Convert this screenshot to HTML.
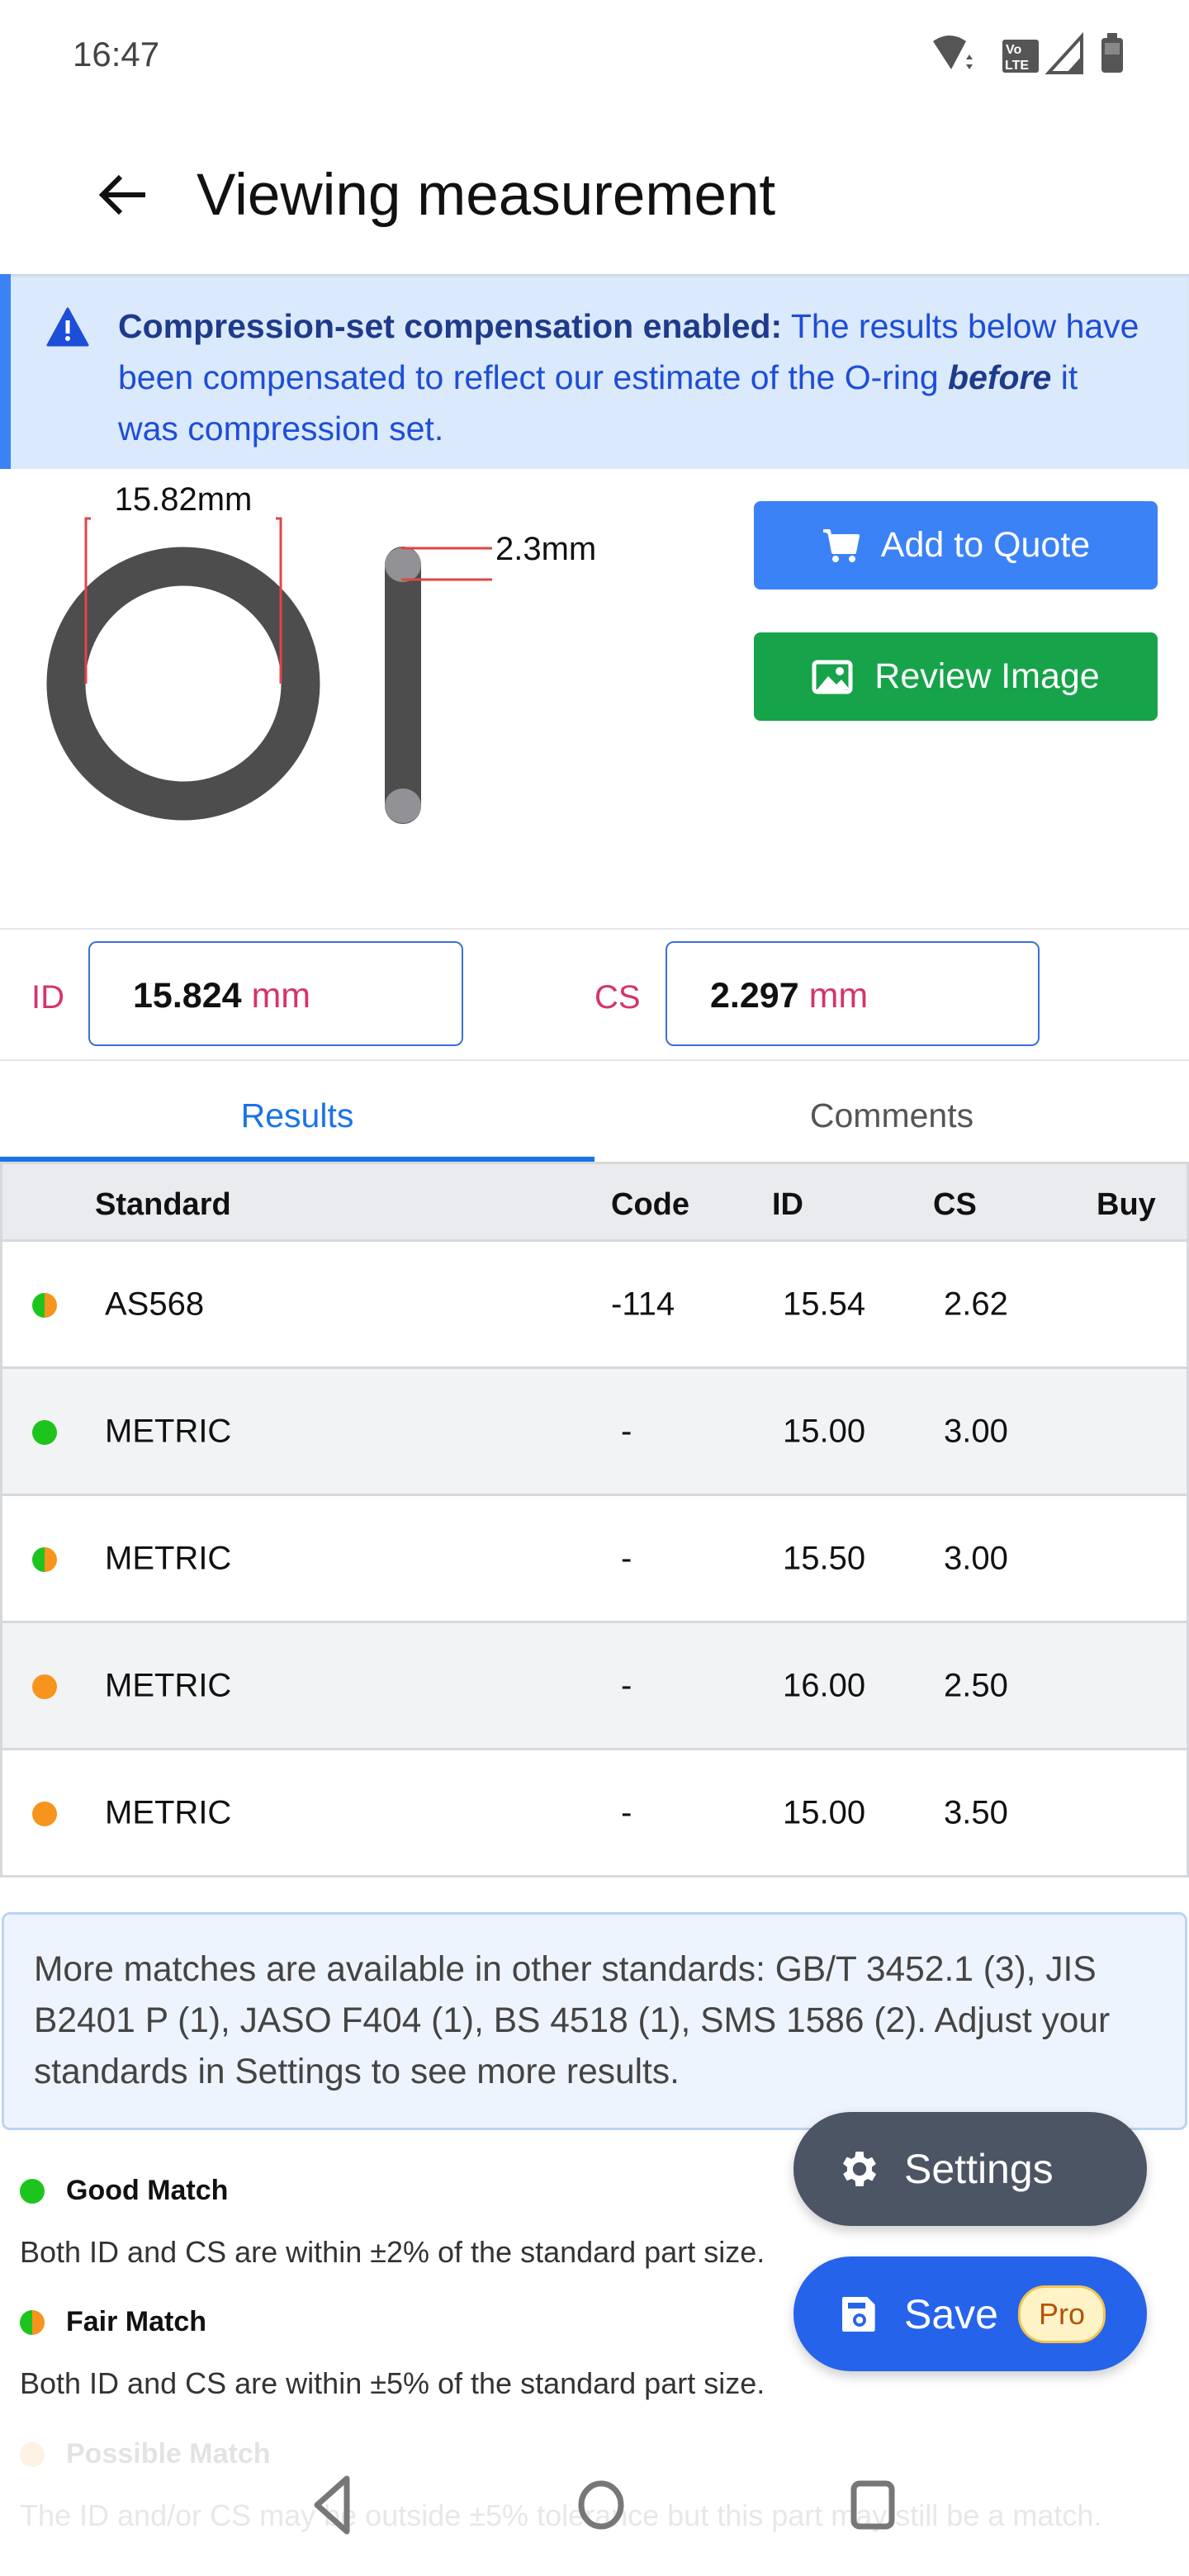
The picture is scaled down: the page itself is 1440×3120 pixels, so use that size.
<!DOCTYPE html>
<html><head><meta charset="utf-8"><style>
*{margin:0;padding:0;box-sizing:border-box}
body{width:1440px;height:3120px;position:relative;background:#fff;font-family:"Liberation Sans",Arial,sans-serif;overflow:hidden;color:#111}
.a{position:absolute;white-space:nowrap}
.row{position:absolute;left:0;width:1440px;height:154px;border-bottom:3px solid #d5d8dc;font-size:40px;color:#111}
.row span{position:absolute;top:50%;transform:translateY(-50%)}
.dot{position:absolute;left:39px;top:62px;width:30px;height:30px;border-radius:50%}
.g{background:#1ec41e}.o{background:#f7941d}.h{background:linear-gradient(90deg,#1ec41e 50%,#f7941d 50%)}
</style></head><body>
<!-- status bar -->
<div class="a" style="left:88px;top:42px;font-size:42px;color:#444">16:47</div>
<svg class="a" style="left:1120px;top:36px" width="250" height="56" viewBox="0 0 250 56">
<path d="M10 14 Q30 0 50 14 L32 48 Z" fill="#555"/>
<path d="M50 36 l4 -6 4 6z M50 42 l4 6 4 -6z" fill="#555"/>
<rect x="94" y="12" width="44" height="40" rx="3" fill="#555"/>
<text x="98" y="29" font-size="16" font-weight="bold" fill="#fff" font-family="Liberation Sans">Vo</text>
<text x="97" y="48" font-size="16" font-weight="bold" fill="#fff" font-family="Liberation Sans">LTE</text>
<path d="M150 52 L190 8 L190 52 Z" fill="none" stroke="#555" stroke-width="4"/>
<path d="M172 52 L190 32 L190 52Z" fill="#555"/>
<rect x="214" y="10" width="26" height="42" rx="4" fill="#555"/><rect x="221" y="4" width="12" height="8" fill="#555"/>
<rect x="218" y="16" width="18" height="14" fill="#888"/>
</svg>
<!-- app bar -->
<svg class="a" style="left:116px;top:208px" width="64" height="56" viewBox="0 0 64 56"><path d="M60 28 H8 M30 6 L8 28 L30 50" fill="none" stroke="#111" stroke-width="6"/></svg>
<div class="a" style="left:238px;top:196px;font-size:71px;color:#111">Viewing measurement</div>
<div class="a" style="left:0;top:332px;width:1440px;height:236px;background:#dbe9fc;box-shadow:inset 0 4px 4px -2px rgba(0,0,0,.12)"></div>
<div class="a" style="left:0;top:332px;width:13px;height:236px;background:#3b82f6"></div>
<svg class="a" style="left:56px;top:372px" width="52" height="48" viewBox="0 0 52 48"><path d="M26 2 L50 46 H2 Z" fill="#1d4ed8" stroke="#1d4ed8" stroke-width="3" stroke-linejoin="round"/><rect x="23.5" y="16" width="5" height="16" fill="#fff"/><circle cx="26" cy="38" r="3" fill="#fff"/></svg>
<div class="a" style="left:143px;top:364px;font-size:41px;line-height:62px;color:#1d4ed8">
<b style="color:#1e3a8a">Compression-set compensation enabled:</b> The results below have<br>been compensated to reflect our estimate of the O-ring <b><i style="color:#1e3a8a">before</i></b> it<br>was compression set.</div>
<!-- diagram -->
<svg class="a" style="left:0;top:568px" width="900" height="556" viewBox="0 0 900 556">
<circle cx="222" cy="260" r="142" fill="none" stroke="#4d4d4d" stroke-width="47"/>
<path d="M104 260 V60 H110 M340 260 V60 H334" fill="none" stroke="#e04545" stroke-width="3"/>
<text x="222" y="50" text-anchor="middle" font-size="40" font-family="Liberation Sans" fill="#111">15.82mm</text>
<rect x="466" y="94" width="44" height="336" rx="22" fill="#4d4d4d"/>
<ellipse cx="488" cy="116" rx="22" ry="21" fill="#929296"/>
<ellipse cx="488" cy="408" rx="22" ry="21" fill="#929296"/>
<path d="M486 96 H596 M486 134 H596" stroke="#e04545" stroke-width="3"/>
<text x="600" y="110" font-size="40" font-family="Liberation Sans" fill="#111">2.3mm</text>
</svg>
<div class="a" style="left:913px;top:607px;width:489px;height:107px;background:#3b82f6;border-radius:8px;color:#fff;font-size:43px;display:flex;align-items:center;justify-content:center;gap:26px">
<svg width="46" height="44" viewBox="0 0 46 44"><path d="M2 4 H9 L14 30 H40 L44 10 H11" fill="#fff" stroke="#fff" stroke-width="4" stroke-linejoin="round"/><circle cx="17" cy="38" r="4" fill="#fff"/><circle cx="37" cy="38" r="4" fill="#fff"/></svg>Add to Quote</div>
<div class="a" style="left:913px;top:766px;width:489px;height:107px;background:#16a34a;border-radius:8px;color:#fff;font-size:43px;display:flex;align-items:center;justify-content:center;gap:26px">
<svg width="50" height="42" viewBox="0 0 50 42"><rect x="3" y="3" width="44" height="36" rx="4" fill="none" stroke="#fff" stroke-width="5"/><path d="M5 38 L20 20 L30 30 L36 24 L46 36Z" fill="#fff"/><circle cx="34" cy="14" r="5" fill="#fff"/></svg>Review Image</div>
<!-- inputs -->
<div class="a" style="left:0;top:1124px;width:1440px;height:2px;background:#e5e7eb"></div>
<div class="a" style="left:38px;top:1186px;font-size:40px;color:#d6336c">ID</div>
<div class="a" style="left:107px;top:1140px;width:454px;height:127px;border:2.5px solid #3b6fd8;border-radius:10px;font-size:43px;padding:40px 0 0 52px"><b>15.824</b> <span style="color:#d6336c">mm</span></div>
<div class="a" style="left:720px;top:1186px;font-size:40px;color:#d6336c">CS</div>
<div class="a" style="left:806px;top:1140px;width:453px;height:127px;border:2.5px solid #3b6fd8;border-radius:10px;font-size:43px;padding:40px 0 0 52px"><b>2.297</b> <span style="color:#d6336c">mm</span></div>
<div class="a" style="left:0;top:1283px;width:1440px;height:2px;background:#e5e7eb"></div>
<!-- tabs -->
<div class="a" style="left:0;top:1328px;width:720px;text-align:center;font-size:41px;color:#1a73e8">Results</div>
<div class="a" style="left:720px;top:1328px;width:720px;text-align:center;font-size:41px;color:#555">Comments</div>
<div class="a" style="left:0;top:1401px;width:720px;height:6px;background:#1a73e8"></div>
<div class="a" style="left:0;top:1407px;width:1440px;height:3px;background:#d8d8d8"></div>
<!-- table -->
<div class="a" style="left:0;top:1410px;width:1440px;height:94px;background:#e9ebee;border-bottom:3px solid #d5d8dc;font-size:38px;font-weight:bold">
<span class="a" style="left:115px;top:28px">Standard</span><span class="a" style="left:740px;top:28px">Code</span><span class="a" style="left:935px;top:28px">ID</span><span class="a" style="left:1130px;top:28px">CS</span><span class="a" style="left:1328px;top:28px">Buy</span></div>
<div class="row" style="top:1504px;background:#fff"><i class="dot h"></i><span style="left:127px">AS568</span><span style="left:740px">-114</span><span style="left:948px">15.54</span><span style="left:1143px">2.62</span></div>
<div class="row" style="top:1658px;background:#f2f3f5"><i class="dot g"></i><span style="left:127px">METRIC</span><span style="left:752px">-</span><span style="left:948px">15.00</span><span style="left:1143px">3.00</span></div>
<div class="row" style="top:1812px;background:#fff"><i class="dot h"></i><span style="left:127px">METRIC</span><span style="left:752px">-</span><span style="left:948px">15.50</span><span style="left:1143px">3.00</span></div>
<div class="row" style="top:1966px;background:#f2f3f5"><i class="dot o"></i><span style="left:127px">METRIC</span><span style="left:752px">-</span><span style="left:948px">16.00</span><span style="left:1143px">2.50</span></div>
<div class="row" style="top:2120px;background:#fff;height:154px"><i class="dot o"></i><span style="left:127px">METRIC</span><span style="left:752px">-</span><span style="left:948px">15.00</span><span style="left:1143px">3.50</span></div>
<div class="a" style="left:0;top:1410px;width:3px;height:864px;background:#d5d8dc"></div>
<div class="a" style="left:1437px;top:1410px;width:3px;height:864px;background:#d5d8dc"></div>
<!-- info -->
<div class="a" style="left:2px;top:2316px;width:1436px;height:264px;background:#eef4fd;border:3px solid #bcd3f3;border-radius:10px;font-size:42.5px;line-height:62px;color:#444;padding:36px 0 0 36px;white-space:nowrap">More matches are available in other standards: GB/T 3452.1 (3), JIS<br>B2401 P (1), JASO F404 (1), BS 4518 (1), SMS 1586 (2). Adjust your<br>standards in Settings to see more results.</div>
<!-- legend -->
<i class="a dot g" style="left:24px;top:2639px"></i>
<div class="a" style="left:80px;top:2634px;font-size:34px;font-weight:bold">Good Match</div>
<div class="a" style="left:24px;top:2707px;font-size:36px;color:#333">Both ID and CS are within ±2% of the standard part size.</div>
<i class="a dot h" style="left:24px;top:2798px"></i>
<div class="a" style="left:80px;top:2793px;font-size:34px;font-weight:bold">Fair Match</div>
<div class="a" style="left:24px;top:2866px;font-size:36px;color:#333">Both ID and CS are within ±5% of the standard part size.</div>
<div style="opacity:.12">
<i class="a dot o" style="left:24px;top:2958px"></i>
<div class="a" style="left:80px;top:2953px;font-size:34px;font-weight:bold">Possible Match</div>
<div class="a" style="left:24px;top:3026px;font-size:36px;color:#333">The ID and/or CS may be outside ±5% tolerance but this part may still be a match.</div>
</div>
<!-- FABs -->
<div class="a" style="left:961px;top:2558px;width:428px;height:138px;border-radius:69px;background:#4b5563;box-shadow:0 6px 14px rgba(0,0,0,.2);color:#fff;font-size:50px;display:flex;align-items:center;padding-left:52px;gap:26px">
<svg width="56" height="56" viewBox="0 0 24 24"><path fill="#fff" d="M19.4 13a7.5 7.5 0 0 0 0-2l2.1-1.6-2-3.5-2.5 1a7.6 7.6 0 0 0-1.7-1L15 3h-4l-.4 2.8a7.6 7.6 0 0 0-1.7 1l-2.5-1-2 3.5L6.6 11a7.5 7.5 0 0 0 0 2l-2.1 1.6 2 3.5 2.5-1c.5.4 1.1.7 1.7 1L11 21h4l.4-2.8c.6-.3 1.2-.6 1.7-1l2.5 1 2-3.5zM13 15.5a3.5 3.5 0 1 1 0-7 3.5 3.5 0 0 1 0 7z" transform="translate(-1 0)"/><circle cx="12" cy="12" r="2" fill="#4b5563"/></svg>Settings</div>
<div class="a" style="left:961px;top:2733px;width:428px;height:139px;border-radius:70px;background:#2563eb;box-shadow:0 6px 14px rgba(0,0,0,.2);color:#fff;font-size:50px;display:flex;align-items:center;padding-left:52px;gap:26px">
<svg width="56" height="56" viewBox="0 0 24 24"><path fill="#fff" d="M4 3h12l4 4v13a1 1 0 0 1-1 1H4a1 1 0 0 1-1-1V4a1 1 0 0 1 1-1z"/><rect x="6" y="6" width="9" height="3" fill="#2563eb"/><circle cx="12" cy="15" r="2.6" fill="none" stroke="#2563eb" stroke-width="1.6"/></svg>Save
<span style="margin-left:-2px;background:#fef3c7;border:3px solid #f3c550;border-radius:33px;color:#b45309;font-size:36px;padding:11px 22px">Pro</span></div>
<!-- nav -->
<svg class="a" style="left:360px;top:2990px" width="740" height="90" viewBox="0 0 740 90">
<path d="M60 12 L24 44 L60 76 Z" fill="none" stroke="#777" stroke-width="7" stroke-linejoin="round"/>
<ellipse cx="368" cy="44" rx="24" ry="26" fill="none" stroke="#777" stroke-width="7"/>
<rect x="674" y="18" width="46" height="52" rx="7" fill="none" stroke="#777" stroke-width="7"/>
</svg>
</body></html>
